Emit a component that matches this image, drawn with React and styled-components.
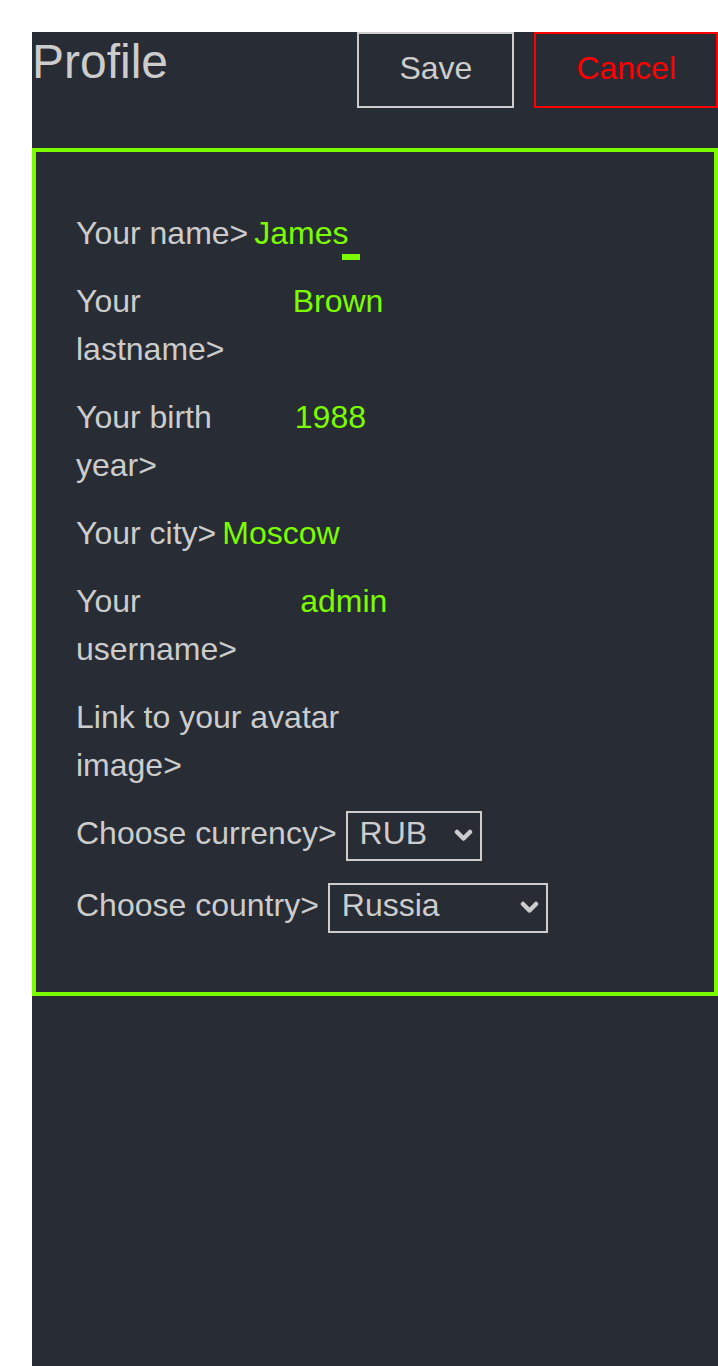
import React from "react";
import styled, { createGlobalStyle } from "styled-components";

const GlobalStyle = createGlobalStyle`
  *, *::before, *::after { box-sizing: border-box; }
  html, body { margin: 0; padding: 0; background: #ffffff; }
  body { font-family: "Liberation Sans", Arial, sans-serif; }
  #root { padding: 32px 0 0 32px; width: 718px; }
`;

const TEXT = "#cccccc";
const GREEN = "#7cfc00";
const BG = "#282c34";

const Page = styled.div`
  background: ${BG};
  min-height: calc(100vh - 32px);
  width: 100%;
  font-family: "Liberation Sans", Arial, sans-serif;
`;

const Header = styled.header`
  display: flex;
  justify-content: space-between;
  align-items: flex-start;
  margin-bottom: 40px;
`;

const Title = styled.h1`
  margin: 0;
  font-size: 48px;
  font-weight: 400;
  line-height: 60px;
  color: ${TEXT};
`;

const Actions = styled.div`
  display: flex;
  gap: 20px;
`;

const ActionButton = styled.button`
  background: transparent;
  border: 2px solid ${(p) => p.$tone};
  color: ${(p) => p.$tone};
  font-family: "Liberation Sans", Arial, sans-serif;
  font-size: 32px;
  line-height: 36px;
  padding: 16px 40px 20px;
  margin: 0;
  cursor: pointer;
`;

const Card = styled.section`
  border: 4px solid ${GREEN};
  padding: 57px 40px 59px;
  display: flex;
  flex-direction: column;
  gap: 20px;
`;

const Row = styled.div`
  display: flex;
  align-items: baseline;
  gap: ${(p) => p.$gap}px;
`;

const Label = styled.label`
  flex: 0 1 auto;
  font-size: 32px;
  line-height: 48px;
  color: ${TEXT};
`;

const Field = styled.div`
  position: relative;
  display: flex;
  flex: 0 1 402px;
  min-width: 0;
`;

const TextInput = styled.input`
  width: 100%;
  min-width: 0;
  height: 48px;
  margin: 0;
  padding: 0;
  border: none;
  outline: none;
  background: transparent;
  color: ${GREEN};
  font-family: "Liberation Sans", Arial, sans-serif;
  font-size: 32px;
  line-height: 48px;
`;

const Caret = styled.span`
  position: absolute;
  left: 88px;
  top: 45px;
  width: 18px;
  height: 6px;
  background: ${GREEN};
`;

const SelectBox = styled.div`
  position: relative;
  flex: none;
  display: inline-block;
`;

const Select = styled.select`
  appearance: none;
  -webkit-appearance: none;
  width: ${(p) => p.$width}px;
  height: 50px;
  margin: 0;
  padding: 0 40px 6px 12px;
  border: 2px solid ${TEXT};
  border-radius: 0;
  background: transparent;
  color: ${TEXT};
  font-family: "Liberation Sans", Arial, sans-serif;
  font-size: 32px;
  outline: none;
  option { background: ${BG}; color: ${TEXT}; }
`;

const Chevron = styled.svg`
  position: absolute;
  right: 9px;
  top: 18px;
  width: 19px;
  height: 13px;
  pointer-events: none;
`;

const fields = [
  { id: "name", label: "Your name>", value: "James", caret: true },
  { id: "lastname", label: "Your lastname>", value: "Brown" },
  { id: "birth", label: "Your birth year>", value: "1988" },
  { id: "city", label: "Your city>", value: "Moscow" },
  { id: "username", label: "Your username>", value: "admin" },
  { id: "avatar", label: "Link to your avatar image>", value: "" },
];

const selects = [
  { id: "currency", label: "Choose currency>", value: "RUB", options: ["RUB", "USD", "EUR"], width: 136 },
  { id: "country", label: "Choose country>", value: "Russia", options: ["Russia", "Belarus", "Armenia"], width: 220 },
];

export default function App() {
  return (
    <>
      <GlobalStyle />
      <Page>
        <Header>
          <Title>Profile</Title>
          <Actions>
            <ActionButton $tone={TEXT}>Save</ActionButton>
            <ActionButton $tone="#ff0000">Cancel</ActionButton>
          </Actions>
        </Header>
        <Card>
          {fields.map((f) => (
            <Row key={f.id} $gap={6}>
              <Label htmlFor={f.id}>{f.label}</Label>
              <Field>
                <TextInput id={f.id} defaultValue={f.value} />
                {f.caret && <Caret />}
              </Field>
            </Row>
          ))}
          {selects.map((s) => (
            <Row key={s.id} $gap={9}>
              <Label htmlFor={s.id}>{s.label}</Label>
              <SelectBox>
                <Select id={s.id} defaultValue={s.value} $width={s.width}>
                  {s.options.map((o) => (
                    <option key={o} value={o}>{o}</option>
                  ))}
                </Select>
                <Chevron viewBox="0 0 19 13">
                  <polyline
                    points="3,3 9.5,9.5 16,3"
                    fill="none"
                    stroke={TEXT}
                    strokeWidth="4.5"
                    strokeLinecap="round"
                    strokeLinejoin="round"
                  />
                </Chevron>
              </SelectBox>
            </Row>
          ))}
        </Card>
      </Page>
    </>
  );
}
